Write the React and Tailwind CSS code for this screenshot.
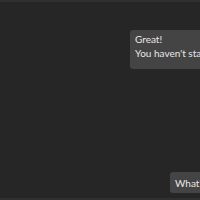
export default function App() {
  return (
    <div
      className="h-[200px] w-[200px] overflow-hidden bg-[#262626] border-t-2 border-b-2 border-[#303030] text-[#e8e8e8]"
      style={{ fontFamily: 'Lato, "Open Sans", sans-serif' }}
    >
      <div className="flex h-full flex-col pt-[28px] pb-[5px]">
        <div className="ml-[130px] w-[240px] shrink-0 rounded-[3px] bg-[#444444] px-[5px] pt-[2px] pb-[9px] text-[10px] leading-[14px] whitespace-nowrap">
          <p>Great!</p>
          <p>You haven't started any course yet.</p>
        </div>
        <div className="mt-auto ml-[170px] w-[140px] shrink-0 rounded-[3px] bg-[#444444] px-[5px] pt-[4px] pb-[3px] text-[10px] leading-[14px] whitespace-nowrap">
          <p>What's next?</p>
        </div>
      </div>
    </div>
  )
}
